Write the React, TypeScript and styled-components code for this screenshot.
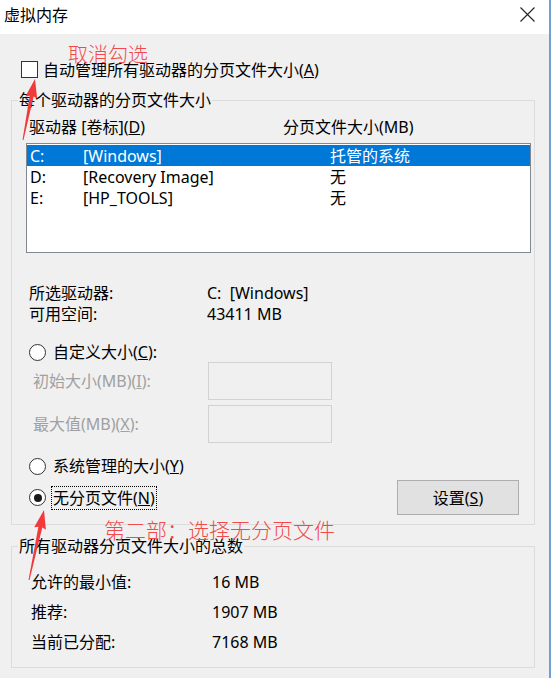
import React from "react";
import styled, { createGlobalStyle } from "styled-components";

const FONT = `"Noto Sans", "Noto Sans CJK SC", sans-serif`;

const GlobalStyle = createGlobalStyle`
  html, body { margin: 0; padding: 0; background: #f0f0f0; }
  body { font-family: ${FONT}; }
  * { box-sizing: border-box; }
`;

const Window = styled.div`
  position: relative;
  width: 551px;
  height: 678px;
  background: #f0f0f0;
  border-right: 2px solid #6f9fd5;
  display: flex;
  flex-direction: column;
  font: 16px/20px ${FONT};
  color: #000;
  overflow: hidden;
`;

const TitleBar = styled.div`
  flex: none;
  height: 34px;
  background: #fff;
  display: flex;
  align-items: center;
  justify-content: space-between;
  padding-left: 4px;
`;

const Title = styled.span`
  padding-bottom: 4px;
`;

const CloseBox = styled.div`
  width: 44px;
  height: 34px;
  display: flex;
  align-items: center;
  justify-content: center;
  padding-bottom: 6px;
`;

const Body = styled.div`
  display: flex;
  flex-direction: column;
  padding: 27px 14px 0 11px;
`;

const CheckRow = styled.div`
  display: flex;
  align-items: center;
  gap: 5px;
  height: 17px;
  padding-left: 10px;
`;

const CheckBox = styled.span`
  width: 17px;
  height: 17px;
  border: 1px solid #333;
  background: #fff;
  flex: none;
`;

const Group = styled.fieldset<{ $mt: number; $pt: number; $pb: number }>`
  margin: ${(p) => p.$mt}px 0 0 0;
  padding: ${(p) => p.$pt}px 0 ${(p) => p.$pb}px 0;
  border: 1px solid #dcdcdc;
  min-width: 0;
`;

const Legend = styled.legend`
  padding: 0 1px;
  margin-left: 6px;
  line-height: 20px;
`;

const HeaderRow = styled.div`
  display: grid;
  grid-template-columns: 254px 1fr;
  padding-left: 17px;
`;

const ListBox = styled.div`
  margin: 6px 3px 0 14px;
  height: 110px;
  border: 1px solid #828790;
  background: #fff;
  padding: 1px 0;
`;

const ListRow = styled.div<{ $selected?: boolean }>`
  display: grid;
  grid-template-columns: 53px 247px 1fr;
  height: 21px;
  align-items: center;
  padding-left: 3px;
  background: ${(p) => (p.$selected ? "#0078d7" : "transparent")};
  color: ${(p) => (p.$selected ? "#fff" : "#000")};
`;

const InfoGrid = styled.div<{ $mt: number; $col: number; $pl: number; $gap: number }>`
  display: grid;
  grid-template-columns: ${(p) => p.$col}px 1fr;
  row-gap: ${(p) => p.$gap}px;
  margin-top: ${(p) => p.$mt}px;
  padding-left: ${(p) => p.$pl}px;
`;

const RadioRow = styled.div<{ $mt: number }>`
  display: flex;
  align-items: center;
  gap: 7px;
  height: 20px;
  margin-top: ${(p) => p.$mt}px;
  padding-left: 17px;
`;

const Radio = styled.span<{ $checked?: boolean }>`
  width: 17px;
  height: 17px;
  border-radius: 50%;
  border: 1px solid #333;
  background: #fff;
  flex: none;
  display: flex;
  align-items: center;
  justify-content: center;
  &::after {
    content: "";
    display: ${(p) => (p.$checked ? "block" : "none")};
    width: 8px;
    height: 8px;
    border-radius: 50%;
    background: #1a1a1a;
  }
`;

const InputRow = styled.div<{ $mt: number }>`
  display: grid;
  grid-template-columns: 175px 124px;
  align-items: center;
  height: 38px;
  margin-top: ${(p) => p.$mt}px;
  padding-left: 21px;
  color: #a0a0a0;
`;

const DisabledInput = styled.div`
  height: 38px;
  border: 1px solid #d2d2d2;
  background: #f0f0f0;
`;

const ActionRow = styled.div`
  display: flex;
  align-items: center;
  justify-content: space-between;
  height: 35px;
  margin-top: 4px;
  padding: 0 15px 0 17px;
`;

const RadioGroup = styled.div`
  display: flex;
  align-items: center;
  gap: 5px;
`;

const FocusLabel = styled.span`
  padding: 2px;
  outline: 1px dotted #000;
  outline-offset: -1px;
`;

const Button = styled.button`
  width: 122px;
  height: 35px;
  background: #e1e1e1;
  border: 1px solid #adadad;
  font: 16px/20px ${FONT};
  color: #000;
  padding: 0;
`;

const Annotation = styled.span<{ $x: number; $y: number; $size: number }>`
  position: absolute;
  left: ${(p) => p.$x}px;
  top: ${(p) => p.$y}px;
  font-family: "Noto Sans CJK SC", sans-serif;
  font-weight: 300;
  font-size: ${(p) => p.$size}px;
  line-height: 24px;
  color: #f24a4c;
  white-space: nowrap;
`;

const Overlay = styled.svg`
  position: absolute;
  left: 0;
  top: 0;
  pointer-events: none;
`;

function arrow(tx: number, ty: number, bx: number, by: number) {
  const dx = tx - bx;
  const dy = ty - by;
  const len = Math.hypot(dx, dy);
  const ux = dx / len;
  const uy = dy / len;
  const nx = -uy;
  const ny = ux;
  const hl = 19;
  const hw = 6;
  const sw = 2;
  const hx = tx - hl * ux;
  const hy = ty - hl * uy;
  const pts = [
    [tx, ty],
    [hx - hw * nx, hy - hw * ny],
    [hx - sw * nx + 1.5 * ux, hy - sw * ny + 1.5 * uy],
    [bx - 0.5 * nx, by - 0.5 * ny],
    [bx + 0.5 * nx, by + 0.5 * ny],
    [hx + sw * nx + 1.5 * ux, hy + sw * ny + 1.5 * uy],
    [hx + hw * nx, hy + hw * ny],
  ];
  return pts.map((p) => `${p[0].toFixed(1)},${p[1].toFixed(1)}`).join(" ");
}

const rows = [
  { d: "C:", l: "[Windows]", s: "托管的系统", sel: true },
  { d: "D:", l: "[Recovery Image]", s: "无" },
  { d: "E:", l: "[HP_TOOLS]", s: "无" },
];

export default function App() {
  return (
    <>
      <GlobalStyle />
      <Window>
        <TitleBar>
          <Title>虚拟内存</Title>
          <CloseBox>
            <svg width="15" height="15" viewBox="0 0 15 15">
              <path d="M0.5 0.5 L14.5 14.5 M14.5 0.5 L0.5 14.5" stroke="#222" strokeWidth="1.1" fill="none" />
            </svg>
          </CloseBox>
        </TitleBar>
        <Body>
          <CheckRow>
            <CheckBox />
            <span>
              自动管理所有驱动器的分页文件大小(<u>A</u>)
            </span>
          </CheckRow>

          <Group $mt={12} $pt={7} $pb={9}>
            <Legend>每个驱动器的分页文件大小</Legend>
            <HeaderRow>
              <span>
                驱动器 [卷标](<u>D</u>)
              </span>
              <span>分页文件大小(MB)</span>
            </HeaderRow>
            <ListBox>
              {rows.map((r) => (
                <ListRow key={r.d} $selected={r.sel}>
                  <span>{r.d}</span>
                  <span>{r.l}</span>
                  <span>{r.s}</span>
                </ListRow>
              ))}
            </ListBox>

            <InfoGrid $mt={30} $col={178} $pl={17} $gap={1}>
              <span>所选驱动器:</span>
              <span>C:&nbsp; [Windows]</span>
              <span>可用空间:</span>
              <span>43411 MB</span>
            </InfoGrid>

            <RadioRow $mt={18}>
              <Radio />
              <span>
                自定义大小(<u>C</u>):
              </span>
            </RadioRow>
            <InputRow $mt={0}>
              <span>
                初始大小(MB)(<u>I</u>):
              </span>
              <DisabledInput />
            </InputRow>
            <InputRow $mt={5}>
              <span>
                最大值(MB)(<u>X</u>):
              </span>
              <DisabledInput />
            </InputRow>

            <RadioRow $mt={13}>
              <Radio />
              <span>
                系统管理的大小(<u>Y</u>)
              </span>
            </RadioRow>

            <ActionRow>
              <RadioGroup>
                <Radio $checked />
                <FocusLabel>
                  无分页文件(<u>N</u>)
                </FocusLabel>
              </RadioGroup>
              <Button>
                设置(<u>S</u>)
              </Button>
            </ActionRow>
          </Group>

          <Group $mt={11} $pt={16} $pb={15}>
            <Legend>所有驱动器分页文件大小的总数</Legend>
            <InfoGrid $mt={0} $col={181} $pl={19} $gap={10}>
              <span>允许的最小值:</span>
              <span>16 MB</span>
              <span>推荐:</span>
              <span>1907 MB</span>
              <span>当前已分配:</span>
              <span>7168 MB</span>
            </InfoGrid>
          </Group>
        </Body>

        <Annotation $x={68} $y={42} $size={20}>
          取消勾选
        </Annotation>
        <Annotation $x={104} $y={517} $size={21}>
          第二部：选择无分页文件
        </Annotation>

        <Overlay width="551" height="678" viewBox="0 0 551 678">
          <polygon points={arrow(35, 79, 23, 140)} fill="#f03a3c" />
          <polygon points={arrow(44, 510, 29, 580)} fill="#f03a3c" />
        </Overlay>
      </Window>
    </>
  );
}
